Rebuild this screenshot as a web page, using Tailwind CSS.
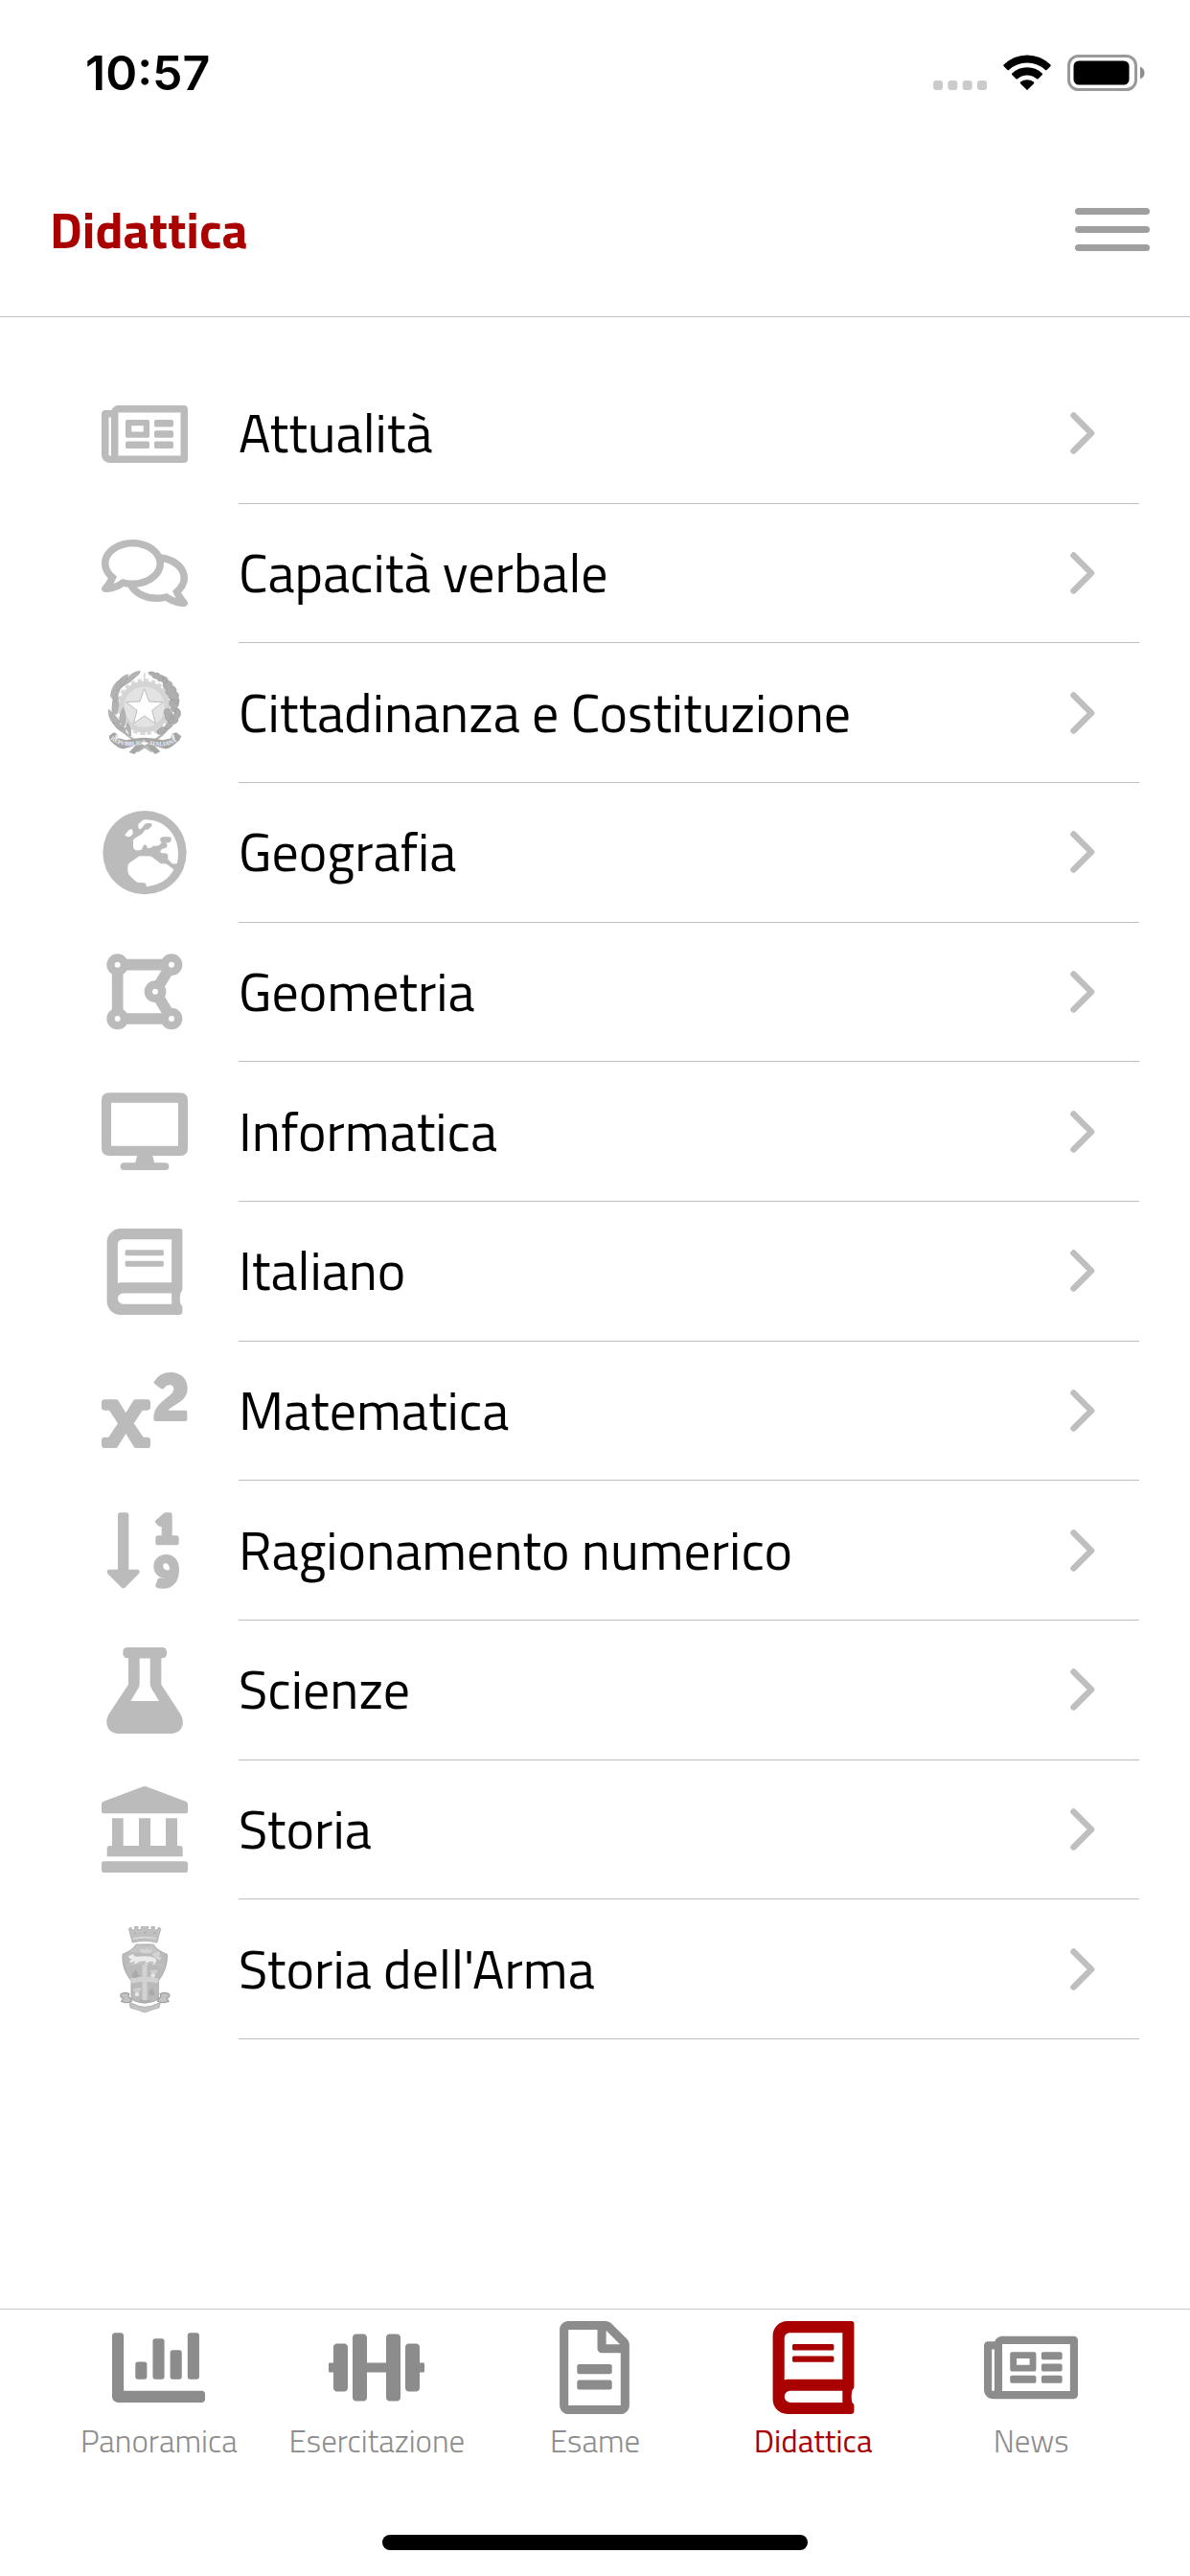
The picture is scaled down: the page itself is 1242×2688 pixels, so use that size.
<!DOCTYPE html>
<html lang="it">
<head>
<meta charset="utf-8">
<meta name="viewport" content="width=device-width, initial-scale=1">
<title>Didattica</title>
<script src="https://cdn.jsdelivr.net/npm/@tailwindcss/browser@4"></script>
</head>
<body class="flex min-h-screen flex-col bg-white font-['Titillium_Web','Roboto',sans-serif] text-black">

<!-- Shared icon shapes -->
<svg class="hidden" aria-hidden="true">
  <symbol id="newspaper" viewBox="0 64 576 384">
    <path fill="currentColor" d="M552 64H112c-20.858 0-38.643 13.377-45.248 32H24c-13.255 0-24 10.745-24 24v272c0 30.928 25.072 56 56 56h496c13.255 0 24-10.745 24-24V88c0-13.255-10.745-24-24-24zM48 392V144h16v248c0 4.411-3.589 8-8 8s-8-3.589-8-8zm480 8H111.422c.374-2.614.578-5.283.578-8V112h416v288zM172 280h136c6.627 0 12-5.373 12-12v-96c0-6.627-5.373-12-12-12H172c-6.627 0-12 5.373-12 12v96c0 6.627 5.373 12 12 12zm28-80h80v40h-80v-40zm-40 140v-24c0-6.627 5.373-12 12-12h136c6.627 0 12 5.373 12 12v24c0 6.627-5.373 12-12 12H172c-6.627 0-12-5.373-12-12zm192 0v-24c0-6.627 5.373-12 12-12h104c6.627 0 12 5.373 12 12v24c0 6.627-5.373 12-12 12H364c-6.627 0-12-5.373-12-12zm0-144v-24c0-6.627 5.373-12 12-12h104c6.627 0 12 5.373 12 12v24c0 6.627-5.373 12-12 12H364c-6.627 0-12-5.373-12-12zm0 72v-24c0-6.627 5.373-12 12-12h104c6.627 0 12 5.373 12 12v24c0 6.627-5.373 12-12 12H364c-6.627 0-12-5.373-12-12z"/>
  </symbol>
  <symbol id="book" viewBox="0 0 448 512">
    <path fill="currentColor" fill-rule="evenodd" d="M80 0H432Q448 0 448 16V360Q448 371 438 380C432 400 432 430 437 448Q448 456 448 466V494Q448 512 430 512H80C36 512 0 476 0 432V80C0 36 36 0 80 0zM384 64H96C76 64 64 76 64 96V324Q73 320 80 320H384zM384 384H96A32 32 0 0 0 96 448H384zM116 127H329Q337 127 337 135V153Q337 161 329 161H116Q108 161 108 153V135Q108 127 116 127zM116 192H329Q337 192 337 200V218Q337 226 329 226H116Q108 226 108 218V200Q108 192 116 192z"/>
  </symbol>
  <symbol id="chevron" viewBox="0 0 26 46">
    <path fill="none" stroke="currentColor" stroke-width="6.5" stroke-linecap="round" stroke-linejoin="round" d="M3.5 4.5 22 23 3.5 41.5"/>
  </symbol>
</svg>

<div class="flex h-[152px] items-center justify-between pr-[46px] pl-[89px]">
  <time class="font-['Inter',sans-serif] text-[50px] leading-none font-semibold">10:57</time>
  <div class="flex items-center">
    <svg class="h-[38px] w-[56px]" viewBox="0 0 56 38" fill="#cbcbcb" aria-label="Segnale"><rect y="27" width="10" height="10" rx="3"/><rect x="15.3" y="27" width="10" height="10" rx="3"/><rect x="30.7" y="27" width="10" height="10" rx="3"/><rect x="46" y="27" width="10" height="10" rx="3"/></svg>
    <svg class="ml-[17px] h-[38px] w-[50px]" viewBox="0 0 50 38" aria-label="Wi-Fi"><path d="M25 .5Q39 .5 49.5 10.5Q50 11.2 49.5 12L45.5 16Q44.8 16.5 44 16Q36 8.5 25 8.5T6 16Q5.2 16.5 4.5 16L.5 12Q0 11.2 .5 10.5Q11 .5 25 .5zM25 13.3Q34 13.3 40.8 19.5Q41.3 20.3 40.8 21L36.6 25.2Q35.8 25.7 35 25.2Q31 21.4 25 21.4T15 25.2Q14.2 25.7 13.4 25.2L9.2 21Q8.7 20.3 9.2 19.5Q16 13.3 25 13.3zM25 26.2Q29 26.2 32 28.6Q32.6 29.4 32 30.2L25 37L18 30.2Q17.4 29.4 18 28.6Q21 26.2 25 26.2z"/></svg>
    <svg class="ml-[17px] h-[38px] w-[82px]" viewBox="0 0 82 38" aria-label="Batteria"><rect x="1.5" y="1.5" width="70" height="35" rx="10" fill="none" stroke="#999" stroke-width="3"/><rect x="6.5" y="6.5" width="58" height="25" rx="5.5"/><path d="M76 12.5Q80.5 14.5 80.5 19T76 25.5z" fill="#8c8c8c"/></svg>
  </div>
</div>

<header class="flex h-[179px] items-center justify-between border-b border-[#c3c3cf] pr-[42px] pb-[3px] pl-[52px]">
  <h1 class="text-[53px] leading-none font-bold text-[#a90000]">Didattica</h1>
  <button type="button" aria-label="Menu" class="flex w-[78px] flex-col gap-[12px] py-2">
    <span class="h-[7px] rounded-full bg-[#9f9f9f]"></span>
    <span class="h-[7px] rounded-full bg-[#9f9f9f]"></span>
    <span class="h-[7px] rounded-full bg-[#9f9f9f]"></span>
  </button>
</header>

<main class="flex-1 pt-[49px] pr-[53px] pl-[106px]">
  <ul class="grid min-h-[1748px] auto-rows-fr text-[56px] leading-none">
    <li class="flex"><a href="#attualita" class="flex flex-1 items-stretch gap-[53px]">
      <span class="flex w-[90px] items-center text-[#bbb]"><svg class="h-[60px] w-[90px]"><use href="#newspaper"/></svg></span>
      <span class="flex flex-1 items-center justify-between border-b border-[#bebebe] pr-[46px]">Attualità<svg class="h-[46px] w-[26px] text-[#bfbfbf]"><use href="#chevron"/></svg></span></a></li>
    <li class="flex"><a href="#capacita-verbale" class="flex flex-1 items-stretch gap-[53px]">
      <span class="flex w-[90px] items-center text-[#bbb]"><svg class="h-[80px] w-[90px]" viewBox="0 0 576 512"><path fill="currentColor" d="M532 386.2c27.5-27.1 44-61.1 44-98.2 0-80-76.5-146.1-176.2-157.9C368.3 72.5 294.3 32 208 32 93.1 32 0 103.6 0 192c0 37 16.5 71 44 98.2-15.3 30.7-37.3 54.5-37.7 54.9-6.3 6.7-8.1 16.5-4.4 25 3.6 8.5 12 14 21.2 14 53.5 0 96.7-20.2 125.2-38.8 9.2 2.1 18.7 3.7 28.4 4.9C208.1 407.6 281.8 448 368 448c20.8 0 40.8-2.4 59.8-6.8C456.3 459.7 499.4 480 553 480c9.2 0 17.5-5.5 21.2-14 3.6-8.5 1.9-18.3-4.4-25-.4-.3-22.5-24.1-37.8-54.8zm-392.8-92.3L122.1 305c-14.1 9.1-28.5 16.3-43.1 21.4 2.7-4.7 5.4-9.7 8-14.8l15.5-31.1L77.7 256C64.2 242.6 48 220.7 48 192c0-60.7 73.3-112 160-112s160 51.3 160 112-73.3 112-160 112c-16.5 0-33-1.9-49-5.6l-19.8-4.5zM498.3 352l-24.7 24.4 15.5 31.1c2.6 5.1 5.3 10.1 8 14.8-14.6-5.1-29-12.3-43.1-21.4l-17.1-11.1-19.9 4.6c-16 3.7-32.5 5.6-49 5.6-54 0-102.2-20.1-131.3-49.7C338 339.5 416 272.9 416 192c0-3.4-.4-6.7-.7-10C479.7 196.5 528 238.8 528 288c0 28.7-16.2 50.6-29.7 64z"/></svg></span>
      <span class="flex flex-1 items-center justify-between border-b border-[#bebebe] pr-[46px]">Capacità verbale<svg class="h-[46px] w-[26px] text-[#bfbfbf]"><use href="#chevron"/></svg></span></a></li>
    <li class="flex"><a href="#cittadinanza" class="flex flex-1 items-stretch gap-[53px]">
      <span class="flex w-[90px] items-center"><svg class="size-[90px]" viewBox="48 56 270 270">
        <!-- Cogwheel and star -->
        <circle cx="182" cy="172" r="84" fill="none" stroke="#d9d9d9" stroke-width="9" stroke-dasharray="13 9"/>
        <circle cx="182" cy="172" r="72" fill="#e3e3e3" stroke="#d4d4d4" stroke-width="17"/>
        <path d="M182 108V66M182 238V260M120 150L104 144M244 150l16-6" stroke="#d4d4d4" stroke-width="5"/>
        <path d="M182 115L197 155 240 157 206 183 217 224 182 200 148 224 159 183 125 157 168 155z" fill="#fff" stroke="#bdbdbd" stroke-width="3"/>
        <!-- Olive branch -->
        <path d="M164 68Q78 100 84 190Q98 245 150 275L206 312" fill="none" stroke="#b9b9b9" stroke-width="7"/>
        <g fill="#b3b3b3" stroke="#9c9c9c" stroke-width="1.5">
          <path d="M168 60Q148 60 128 82L110 110Q140 96 168 66zM132 70Q106 74 96 104L98 124Q124 104 132 70zM110 84Q80 98 76 138L90 158Q108 122 110 84zM96 130Q78 150 82 186L94 196Q108 168 96 130zM70 180Q66 210 96 236L116 240Q100 202 70 180zM116 174Q130 200 118 234L108 240Q98 204 116 174zM82 220Q98 250 138 262L126 242Q104 222 82 220zM130 222Q142 240 140 262L126 256Q118 242 130 222z"/>
        </g>
        <!-- Oak branch -->
        <path d="M198 66Q284 92 280 188Q266 246 216 275L160 312" fill="none" stroke="#b4b4b4" stroke-width="7"/>
        <g fill="#aeaeae" stroke="#979797" stroke-width="1.5">
          <path d="M194 64q14-6 22 2q10-4 16 6q12 0 12 12q10 2 10 12q-12 6-18-4q-12 2-16-8q-12 0-14-10q-10-2-12-10zM242 76q14 2 14 14q14 2 14 16q14 4 12 18q12 8 6 18q8 12-2 20q-12 0-14-12q-14 0-14-14q-14-6-8-18q-14-8-8-22q-8-10 0-20zM262 150q10-8 16 2q12-2 12 10q0 8-8 12q4 10-6 14q-12-2-10-14q-10-8-4-24zM248 178q12-4 16 6q8 4 6 16q8 10 0 20q-10 6-16-4q-10-6-6-16q-10-10 0-22zM284 174q12 6 12 20q-2 10-8 14q2 12-8 16q-10 0-12 10q-8 10-20 6q-4-10 6-16q0-12 12-14q-2-14 10-14q-2-14 8-22zM236 236q10-4 16 4q-4 14-18 18q-12 2-14-6q2-12 16-16z"/>
        </g>
        <!-- Ribbon -->
        <path d="M86 252L72 262Q70 270 76 278L84 286 96 296Q110 306 122 302L150 294Q182 270 214 294L242 302Q254 306 268 296L280 286 292 276 298 264 282 252Q262 254 266 270L240 276Q206 268 182 268Q158 268 126 276L98 270Q102 254 86 252zM160 286L134 314 150 320 180 294zM206 286L232 312 216 320 188 294z" fill="#a6a6a6"/>
        <path d="M96 258l-2 14M270 258l4 14" stroke="#e8e8e8" stroke-width="8"/>
        <path id="motto-left" d="M76 272Q110 306 190 286" fill="none"/>
        <path id="motto-right" d="M198 290Q260 304 296 268" fill="none"/>
        <g fill="#f4f4f4" class="font-['Liberation_Serif',serif] text-[18px] font-bold"><text><textPath href="#motto-left">REPVBBLICA</textPath></text><text><textPath href="#motto-right">ITALIANA</textPath></text></g>
      </svg></span>
      <span class="flex flex-1 items-center justify-between border-b border-[#bebebe] pr-[46px]">Cittadinanza e Costituzione<svg class="h-[46px] w-[26px] text-[#bfbfbf]"><use href="#chevron"/></svg></span></a></li>
    <li class="flex"><a href="#geografia" class="flex flex-1 items-stretch gap-[53px]">
      <span class="flex w-[90px] items-center"><svg class="size-[90px]" viewBox="48 492 270 270">
        <circle cx="183" cy="626" r="131" fill="#bbb"/>
        <path fill="#fff" d="M163 549V536L180 523C245 520 288 570 288 628Q288 648 284 661H270L256 647V634Q254 628 246 628H236Q228 622 236 616L252 610Q256 602 250 595H260Q266 594 266 586V582Q266 577 260 577H238Q231 579 231 588L236 594L229 603Q222 606 210 605Q204 612 196 612H192Q188 601 183 601Q177 603 175 614Q172 619 166 619H155Q148 616 147 609V590Q147 583 152 581L172 569Q178 567 181 559L186 554H193Q197 552 205 543Q207 535 200 534H190Q183 535 180 541Q176 549 172 551Q166 553 163 549z"/>
        <path fill="#fff" d="M170 637H195Q202 637 208 641L234 661H246Q250 661 254 664L274 679Q252 724 193 732H188V727Q186 720 176 720H164Q157 718 152 713L138 700Q131 693 130 685V668Q131 660 138 656L160 641Q165 637 170 637zM121 571L129 560Q136 552 143 553Q147 557 146 566Q142 576 134 577Q124 577 121 571z"/>
      </svg></span>
      <span class="flex flex-1 items-center justify-between border-b border-[#bebebe] pr-[46px]">Geografia<svg class="h-[46px] w-[26px] text-[#bfbfbf]"><use href="#chevron"/></svg></span></a></li>
    <li class="flex"><a href="#geometria" class="flex flex-1 items-stretch gap-[53px]">
      <span class="flex w-[90px] items-center"><svg class="size-[90px]" viewBox="48 60 270 270">
        <path d="M98 110H267L216 194 267 279H98z" fill="none" stroke="#bbb" stroke-width="35"/>
        <g fill="#fff" stroke="#bbb" stroke-width="25"><circle cx="98" cy="110" r="21.5"/><circle cx="267" cy="110" r="21.5"/><circle cx="216" cy="194" r="21.5"/><circle cx="98" cy="279" r="21.5"/><circle cx="267" cy="279" r="21.5"/></g>
      </svg></span>
      <span class="flex flex-1 items-center justify-between border-b border-[#bebebe] pr-[46px]">Geometria<svg class="h-[46px] w-[26px] text-[#bfbfbf]"><use href="#chevron"/></svg></span></a></li>
    <li class="flex"><a href="#informatica" class="flex flex-1 items-stretch gap-[53px]">
      <span class="flex w-[90px] items-center"><svg class="size-[90px]" viewBox="48 497 270 270" fill="#bbb">
        <path fill-rule="evenodd" d="M72 510H294Q318 510 318 534V683Q318 707 294 707H72Q48 707 48 683V534Q48 510 72 510zM78 541V676H288V541z"/>
        <path d="M160 705H207L214 731H153z"/><rect x="107" y="729" width="152" height="23" rx="11.5"/>
      </svg></span>
      <span class="flex flex-1 items-center justify-between border-b border-[#bebebe] pr-[46px]">Informatica<svg class="h-[46px] w-[26px] text-[#bfbfbf]"><use href="#chevron"/></svg></span></a></li>
    <li class="flex"><a href="#italiano" class="flex flex-1 items-stretch gap-[53px]">
      <span class="flex w-[90px] items-center text-[#bbb]"><svg class="size-[90px]"><use href="#book"/></svg></span>
      <span class="flex flex-1 items-center justify-between border-b border-[#bebebe] pr-[46px]">Italiano<svg class="h-[46px] w-[26px] text-[#bfbfbf]"><use href="#chevron"/></svg></span></a></li>
    <li class="flex"><a href="#matematica" class="flex flex-1 items-stretch gap-[53px]">
      <span class="flex w-[90px] items-center"><svg class="size-[90px]" viewBox="48 501 270 270" fill="#bbb">
        <path d="M58 601H94Q98 601 100 604L124 643 148 604Q150 601 154 601H191Q201 601 201 611V625Q201 635 191 635H176L149 676 179 719H191Q201 719 201 729V743Q201 753 191 753H156Q152 753 150 750L124 708 98 750Q96 753 92 753H58Q48 753 48 743V729Q48 719 58 719H70L99 676 72 635H58Q48 635 48 625V611Q48 601 58 601z"/>
        <path d="M212 545Q230 516 264 516C300 516 317 540 317 566C317 610 270 615 257 635H310Q316 635 316 641V663Q316 669 310 669H218Q211 669 211 661C211 605 274 595 274 567Q272 555 261 555Q250 556 243 566Q238 570 233 566L215 553Q210 549 212 545z"/>
      </svg></span>
      <span class="flex flex-1 items-center justify-between border-b border-[#bebebe] pr-[46px]">Matematica<svg class="h-[46px] w-[26px] text-[#bfbfbf]"><use href="#chevron"/></svg></span></a></li>
    <li class="flex"><a href="#ragionamento-numerico" class="flex flex-1 items-stretch gap-[53px]">
      <span class="flex w-[90px] items-center"><svg class="size-[90px]" viewBox="48 68 270 270" fill="#bbb">
        <path d="M107 84H125Q133 84 133 92V262H160Q171 264 165 275L121 319Q116 323 111 319L67 275Q61 264 72 262H99V92Q99 84 107 84z"/>
        <path d="M240 88Q244 84 250 84H262Q269 84 269 91V156H282Q290 156 290 164V178Q290 186 282 186H225Q217 186 217 178V164Q217 156 225 156H236V127Q231 129 226 126L217 116Q213 112 218 108z"/>
        <path fill-rule="evenodd" d="M250 215C277 215 291 236 291 262C291 300 272 322 240 322Q228 322 221 319Q215 316 217 311L224 292Q227 287 234 289Q246 291 250 290C225 290 211 273 211 252C211 230 228 215 250 215zM248 243C238 244 239 256 245 261C251 267 262 266 261 258Q258 243 248 243z"/>
      </svg></span>
      <span class="flex flex-1 items-center justify-between border-b border-[#bebebe] pr-[46px]">Ragionamento numerico<svg class="h-[46px] w-[26px] text-[#bfbfbf]"><use href="#chevron"/></svg></span></a></li>
    <li class="flex"><a href="#scienze" class="flex flex-1 items-stretch gap-[53px]">
      <span class="flex w-[90px] items-center"><svg class="size-[90px]" viewBox="48 504 270 270" fill="#bbb">
        <rect x="115" y="504" width="137" height="34" rx="14"/>
        <path fill-rule="evenodd" d="M132 530V620L72 711C52 745 72 774 100 774H266C296 774 314 745 294 711L235 620V530zM167 538H200V618Q200 626 204 632L228 672H139L163 632Q167 626 167 618z"/>
      </svg></span>
      <span class="flex flex-1 items-center justify-between border-b border-[#bebebe] pr-[46px]">Scienze<svg class="h-[46px] w-[26px] text-[#bfbfbf]"><use href="#chevron"/></svg></span></a></li>
    <li class="flex"><a href="#storia" class="flex flex-1 items-stretch gap-[53px]">
      <span class="flex w-[90px] items-center"><svg class="size-[90px]" viewBox="48 71 270 270" fill="#bbb">
        <path d="M178 72Q183 70 188 72L312 118Q318 121 318 126V148Q318 156 310 156H56Q48 156 48 148V126Q48 121 54 118zM81 171H116V257H165V171H201V257H249V171H285V257H294Q302 258 302 266V291H65V266Q65 258 73 257H81z"/><rect x="48" y="306" width="270" height="35" rx="7"/>
      </svg></span>
      <span class="flex flex-1 items-center justify-between border-b border-[#bebebe] pr-[46px]">Storia<svg class="h-[46px] w-[26px] text-[#bfbfbf]"><use href="#chevron"/></svg></span></a></li>
    <li class="flex"><a href="#storia-arma" class="flex flex-1 items-stretch gap-[53px]">
      <span class="flex w-[90px] items-center"><svg class="size-[90px]" viewBox="48 509 270 270">
        <!-- Turreted crown -->
        <path d="M133 517L140 512 144 521 152 520V509H162V519L172 520V508H194V520L204 519V509H214V520L222 521 227 512 234 517 228 536 222 560Q183 550 145 560L138 536z" fill="#c0c0c0" stroke="#a6a6a6" stroke-width="2"/>
        <path d="M147 548Q183 540 219 548" fill="none" stroke="#d9d9d9" stroke-width="5"/><path d="M150 531h4M182 529h4M212 531h4" stroke="#999" stroke-width="4"/>
        <!-- Shield -->
        <path d="M156 566H210Q220 584 253 597Q256 640 226 680V736Q222 742 204 746Q183 752 162 746Q146 742 141 736V680Q110 642 114 597Q146 584 156 566z" fill="#bababa" stroke="#aaa" stroke-width="3"/>
        <path d="M158 566Q183 574 208 566Q222 588 232 590Q218 600 186 594Q150 594 134 588Q150 582 158 566z" fill="#c4c4c4"/>
        <path d="M166 586l8-8 8 6 8-8 8 8 10-6-4 12-14 4-16-2zM206 598l12-8 10-2 4 10-6 4 10 4-6 12-10-8z" fill="#d4d4d4"/>
        <path d="M132 602l14-6 8 8 30-2 18 2 14 4 4 10-6 12h-6l2-10-14 0-6 10h-6l2-12-20 2-12 8-6-2 4-8-12 6-6-4 8-8-8-2z" fill="#ececec" stroke="#c9c9c9" stroke-width="1.5"/>
        <path d="M128 632Q183 616 240 632" fill="none" stroke="#c8c8c8" stroke-width="3"/>
        <path d="M183 630V744M140 680Q183 670 226 680" fill="none" stroke="#d2d2d2" stroke-width="15"/>
        <path d="M142 662l12-18 12 20-8 6h-14zM196 716l10-16 10 20-6 6h-12z" fill="#aaa"/>
        <path d="M200 644h24l2 10-10 6-18-4zM146 704l24-6 4 12-14 8-14-4z" fill="#cdcdcd" stroke="#b0b0b0" stroke-width="2"/>
        <circle cx="209" cy="663" r="7" fill="#e6e6e6"/><circle cx="159" cy="722" r="7" fill="#e6e6e6"/>
        <path d="M166 738Q183 744 200 738V748Q183 752 166 748z" fill="#adadad"/>
        <!-- Ribbon -->
        <path d="M108 722Q118 714 134 720L132 730 140 736 142 744Q128 752 110 744L116 734 108 730zM260 722Q250 714 232 720L234 730 226 736 224 744Q240 752 258 744L252 734 260 730z" fill="#c3c3c3" stroke="#a2a2a2" stroke-width="4"/>
        <path d="M136 748L148 752Q183 772 220 752L232 748 228 764 204 771 183 779 162 771 138 764z" fill="#c3c3c3" stroke="#acacac" stroke-width="2.5"/>
      </svg></span>
      <span class="flex flex-1 items-center justify-between border-b border-[#bebebe] pr-[46px]">Storia dell'Arma<svg class="h-[46px] w-[26px] text-[#bfbfbf]"><use href="#chevron"/></svg></span></a></li>
  </ul>
</main>

<footer class="border-t border-[#c8c8c8] pb-[27px]">
  <nav class="flex px-[52px] pt-3 text-[33px] leading-[48px] font-light text-[#8c8c8c]">
    <a href="#panoramica" class="flex flex-1 flex-col items-center gap-1"><svg class="h-[97px] w-[97px]" viewBox="0 0 512 512" fill="currentColor"><path d="M496 384H64V80c0-8.84-7.16-16-16-16H16C7.16 64 0 71.16 0 80v336c0 17.67 14.33 32 32 32h464c8.84 0 16-7.16 16-16v-32c0-8.84-7.16-16-16-16z"/><rect x="128" y="224" width="64" height="96" rx="14"/><rect x="224" y="96" width="64" height="224" rx="14"/><rect x="320" y="160" width="64" height="160" rx="14"/><rect x="416" y="64" width="64" height="256" rx="14"/></svg>Panoramica</a>
    <a href="#esercitazione" class="flex flex-1 flex-col items-center gap-1"><svg class="h-[97px] w-[100px]" viewBox="0 0 640 512" fill="currentColor"><path d="M104 96H56c-13.3 0-24 10.7-24 24v104H8c-4.4 0-8 3.6-8 8v48c0 4.4 3.6 8 8 8h24v104c0 13.3 10.7 24 24 24h48c13.3 0 24-10.7 24-24V120c0-13.3-10.7-24-24-24zm528 128h-24V120c0-13.3-10.7-24-24-24h-48c-13.3 0-24 10.7-24 24v272c0 13.3 10.7 24 24 24h48c13.3 0 24-10.7 24-24V288h24c4.4 0 8-3.6 8-8v-48c0-4.4-3.6-8-8-8zM456 32h-48c-13.3 0-24 10.7-24 24v168H256V56c0-13.3-10.7-24-24-24h-48c-13.3 0-24 10.7-24 24v400c0 13.3 10.7 24 24 24h48c13.3 0 24-10.7 24-24V288h128v168c0 13.3 10.7 24 24 24h48c13.3 0 24-10.7 24-24V56c0-13.3-10.7-24-24-24z"/></svg>Esercitazione</a>
    <a href="#esame" class="flex flex-1 flex-col items-center gap-1"><svg class="h-[97px] w-[73px]" viewBox="0 0 384 512" fill="currentColor"><path d="M369.9 97.9L286 14C277 5 264.8 0 252.1 0H48C21.5 0 0 21.5 0 48v416c0 26.5 21.5 48 48 48h288c26.5 0 48-21.5 48-48V131.9c0-12.7-5.1-25-14.1-34zM332.1 128H256V51.9l76.1 76.1zM48 464V48h160v104c0 13.3 10.7 24 24 24h104v288H48z"/><rect x="96" y="238" width="192" height="54" rx="12"/><rect x="96" y="324" width="192" height="54" rx="12"/></svg>Esame</a>
    <a href="#didattica" aria-current="page" class="flex flex-1 flex-col items-center gap-1 font-normal text-[#a90000]"><svg class="h-[97px] w-[86px]"><use href="#book"/></svg>Didattica</a>
    <a href="#news" class="flex flex-1 flex-col items-center gap-1"><svg class="h-[97px] w-[98px]"><use href="#newspaper"/></svg>News</a>
  </nav>
  <div class="mx-auto mt-[74px] h-[16px] w-[444px] rounded-full bg-black"></div>
</footer>
</body>
</html>
